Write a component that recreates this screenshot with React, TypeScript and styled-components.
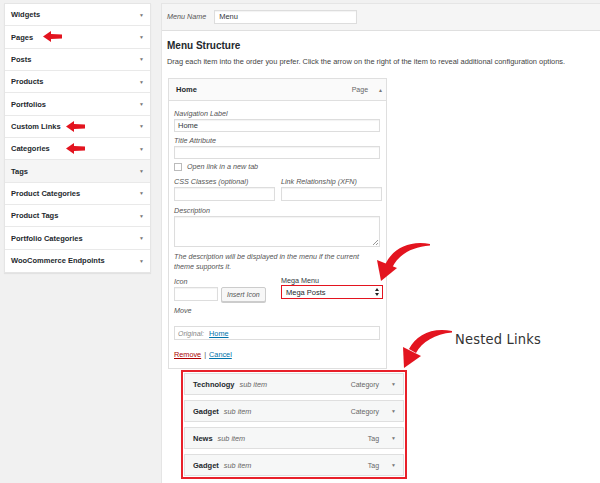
import React from 'react';
import styled, { createGlobalStyle } from 'styled-components';

const GlobalStyle = createGlobalStyle`
  html, body {
    margin: 0;
    padding: 0;
    background: #f1f1f1;
    font-family: "Liberation Sans", Arial, sans-serif;
    color: #23282d;
  }
  * {
    box-sizing: border-box;
  }
`;

interface SideItem {
  label: string;
  arrowAt?: number;
  hover?: boolean;
}

const sideItems: SideItem[] = [
  { label: 'Widgets' },
  { label: 'Pages', arrowAt: 43 },
  { label: 'Posts' },
  { label: 'Products' },
  { label: 'Portfolios' },
  { label: 'Custom Links', arrowAt: 66 },
  { label: 'Categories', arrowAt: 66 },
  { label: 'Tags', hover: true },
  { label: 'Product Categories' },
  { label: 'Product Tags' },
  { label: 'Portfolio Categories' },
  { label: 'WooCommerce Endpoints' },
];

const nested = [
  { title: 'Technology', type: 'Category' },
  { title: 'Gadget', type: 'Category' },
  { title: 'News', type: 'Tag' },
  { title: 'Gadget', type: 'Tag' },
];

const SmallArrow = () => (
  <svg width="20" height="11" viewBox="0 0 20 11">
    <polygon points="0,5.5 8,0 8,3 19,3.5 19,7.5 8,8 8,11" fill="#e3141f" />
  </svg>
);

const SelectArrows = () => (
  <svg width="4" height="8" viewBox="0 0 4 8">
    <polygon points="2,0 4,3 0,3" fill="#222" />
    <polygon points="0,5 4,5 2,8" fill="#222" />
  </svg>
);

const App = () => {
  return (
    <Page>
      <GlobalStyle />
      <Sidebar>
        {sideItems.map((item) => (
          <SideRow key={item.label} $hover={item.hover}>
            <span>{item.label}</span>
            <Caret>▼</Caret>
            {item.arrowAt !== undefined && (
              <Pointer $left={item.arrowAt}>
                <SmallArrow />
              </Pointer>
            )}
          </SideRow>
        ))}
      </Sidebar>

      <Main>
        <TopBar>
          <FieldLabel>Menu Name</FieldLabel>
          <NameInput>Menu</NameInput>
        </TopBar>

        <Body>
          <Heading>Menu Structure</Heading>
          <Intro>
            Drag each item into the order you prefer. Click the arrow on the right of the item to reveal
            additional configuration options.
          </Intro>

          <ItemBox>
            <ItemHeader>
              <ItemTitle>Home</ItemTitle>
              <ItemType $right={4}>Page</ItemType>
              <Caret>▲</Caret>
            </ItemHeader>
            <Settings>
              <FieldLabel>Navigation Label</FieldLabel>
              <TextBox>Home</TextBox>
              <FieldLabel $gap={4}>Title Attribute</FieldLabel>
              <TextBox />
              <CheckRow>
                <CheckBox />
                <FieldLabel>Open link in a new tab</FieldLabel>
              </CheckRow>
              <TwoCols>
                <Col>
                  <FieldLabel>CSS Classes (optional)</FieldLabel>
                  <TextBox $h={14} />
                </Col>
                <Col>
                  <FieldLabel>Link Relationship (XFN)</FieldLabel>
                  <TextBox $h={14} />
                </Col>
              </TwoCols>
              <FieldLabel $gap={5}>Description</FieldLabel>
              <TextArea>
                <Grip />
              </TextArea>
              <Note>
                The description will be displayed in the menu if the current
                <br />
                theme supports it.
              </Note>
              <TwoCols>
                <Col>
                  <FieldLabel>Icon</FieldLabel>
                  <IconRow>
                    <TextBox $w={44} $h={14} />
                    <Button>Insert Icon</Button>
                  </IconRow>
                </Col>
                <Col>
                  <PlainLabel>Mega Menu</PlainLabel>
                  <Select>
                    <span>Mega Posts</span>
                    <SelectArrows />
                  </Select>
                </Col>
              </TwoCols>
              <FieldLabel $gap={4}>Move</FieldLabel>
              <Original>
                <em>Original:</em>
                <LinkText>Home</LinkText>
              </Original>
              <Actions>
                <RemoveLink>Remove</RemoveLink>
                <Sep>|</Sep>
                <LinkText>Cancel</LinkText>
              </Actions>
            </Settings>
          </ItemBox>

          <NestedBox>
            {nested.map((n, i) => (
              <SubItem key={i}>
                <ItemTitle>{n.title}</ItemTitle>
                <SubTag>sub item</SubTag>
                <ItemType $right={7}>{n.type}</ItemType>
                <Caret>▼</Caret>
              </SubItem>
            ))}
          </NestedBox>
        </Body>
      </Main>

      <Annotations width="600" height="483" viewBox="0 0 600 483">
        <g fill="#e3141f">
          <path d="M430,244 C409,240 392,249 385,265 L392,268 C398,255 411,247 430,245.5 Z" />
          <polygon points="381,281 377,260 397,268" />
          <path d="M452,331 C432,327 416,335 409,349 L416,353 C422,342 435,334 452,332.5 Z" />
          <polygon points="404,368 403,347 421,356" />
        </g>
      </Annotations>
      <Handwriting>Nested Links</Handwriting>
    </Page>
  );
};

const Page = styled.div`
  position: relative;
  width: 600px;
  height: 483px;
  overflow: hidden;
  display: flex;
  align-items: flex-start;
  background: #f1f1f1;
`;

const Sidebar = styled.div`
  width: 147px;
  margin: 3px 0 0 4px;
  background: #fff;
  box-shadow: 0 1px 1px rgba(0, 0, 0, 0.06);
  border: 1px solid #e5e5e5;
`;

const SideRow = styled.div<{ $hover?: boolean }>`
  position: relative;
  height: 22.35px;
  display: flex;
  align-items: center;
  justify-content: space-between;
  padding: 0 6px 0 6px;
  font-size: 7.5px;
  font-weight: bold;
  color: #23282d;
  background: ${({ $hover }) => ($hover ? '#f5f5f5' : '#fff')};
  border-bottom: 1px solid #e9e9e9;

  &:last-child {
    border-bottom: none;
  }
`;

const Pointer = styled.span<{ $left: number }>`
  position: absolute;
  left: ${({ $left }) => $left - 5}px;
  top: 5px;
  display: flex;
`;

const Caret = styled.span`
  font-size: 5px;
  color: #777;
  font-weight: normal;
`;

const Main = styled.div`
  flex: 1;
  margin: 3px 0 0 10px;
  display: flex;
  flex-direction: column;
  height: 480px;
  background: #fff;
  border-left: 1px solid #e5e5e5;
  border-top: 1px solid #e5e5e5;
`;

const TopBar = styled.div`
  display: flex;
  align-items: center;
  gap: 8px;
  height: 27px;
  padding: 0 5px;
  background: #f5f5f5;
  border-bottom: 1px solid #dfdfdf;
`;

const FieldLabel = styled.div<{ $gap?: number }>`
  font-size: 7.2px;
  font-style: italic;
  color: #555;
  line-height: 10px;
  margin-top: ${({ $gap }) => $gap ?? 0}px;
`;

const PlainLabel = styled.div`
  font-size: 7.2px;
  color: #32373c;
  line-height: 10px;
  margin-top: -1px;
`;

const NameInput = styled.div`
  width: 143px;
  height: 14px;
  background: #fff;
  border: 1px solid #ddd;
  box-shadow: inset 0 1px 1px rgba(0, 0, 0, 0.05);
  font-size: 7.5px;
  padding: 0 4px;
  line-height: 12px;
  color: #32373c;
`;

const Body = styled.div`
  padding: 9px 5px 0;
  display: flex;
  flex-direction: column;
`;

const Heading = styled.div`
  font-size: 10px;
  font-weight: bold;
  color: #23282d;
  line-height: 12px;
`;

const Intro = styled.div`
  margin-top: 5px;
  font-size: 7.45px;
  color: #444;
  line-height: 10px;
  white-space: nowrap;
`;

const ItemBox = styled.div`
  margin: 11px 0 0 1px;
  width: 219px;
  border: 1px solid #dfdfdf;
  background: #fff;
`;

const ItemHeader = styled.div`
  height: 22px;
  display: flex;
  align-items: center;
  gap: 6px;
  padding: 0 3px 0 7px;
  background: #fafafa;
  border-bottom: 1px solid #dfdfdf;
`;

const ItemTitle = styled.span`
  font-size: 7.5px;
  font-weight: bold;
  color: #23282d;
`;

const ItemType = styled.span<{ $right: number }>`
  margin-left: auto;
  margin-right: ${({ $right }) => $right}px;
  font-size: 7px;
  color: #666;
`;

const Settings = styled.div`
  display: flex;
  flex-direction: column;
  padding: 8px 6px 8px 5px;
`;

const TextBox = styled.div<{ $w?: number; $h?: number }>`
  width: ${({ $w }) => ($w ? `${$w}px` : '100%')};
  height: ${({ $h }) => $h ?? 13}px;
  border: 1px solid #ddd;
  box-shadow: inset 0 1px 1px rgba(0, 0, 0, 0.05);
  background: #fff;
  font-size: 7.5px;
  line-height: 11px;
  padding: 0 3px;
  color: #32373c;
`;

const CheckRow = styled.div`
  display: flex;
  align-items: center;
  gap: 4px;
  height: 12px;
  margin: 2px 0 4px;

  ${FieldLabel} {
    margin-left: 1px;
  }
`;

const CheckBox = styled.span`
  width: 8px;
  height: 8px;
  border: 1px solid #bbb;
  background: #fff;
`;

const TwoCols = styled.div`
  display: grid;
  grid-template-columns: 101px 101px;
  gap: 6px;
`;

const Col = styled.div`
  display: flex;
  flex-direction: column;
`;

const TextArea = styled.div`
  position: relative;
  height: 31px;
  border: 1px solid #ddd;
  box-shadow: inset 0 1px 1px rgba(0, 0, 0, 0.05);
`;

const Grip = styled.span`
  position: absolute;
  right: 1px;
  bottom: 1px;
  width: 5px;
  height: 5px;
  background: linear-gradient(135deg, transparent 45%, #999 45%, #999 55%, transparent 55%, transparent 75%, #999 75%, #999 85%, transparent 85%);
`;

const Note = styled.div`
  margin: 5px 0 5px;
  font-size: 7.2px;
  font-style: italic;
  color: #555;
  line-height: 10px;
`;

const IconRow = styled.div`
  display: flex;
  gap: 3px;
  margin-top: 0;
`;

const Button = styled.div`
  height: 15px;
  padding: 0 5px;
  border: 1px solid #ccc;
  border-radius: 2px;
  background: #f7f7f7;
  box-shadow: 0 1px 0 #ccc;
  font-size: 7px;
  font-style: italic;
  color: #555;
  line-height: 13px;
`;

const Select = styled.div`
  display: flex;
  align-items: center;
  justify-content: space-between;
  height: 14px;
  width: 102px;
  margin-top: -1px;
  border: 1.5px solid #e3141f;
  padding: 0 3px 0 4px;
  font-size: 7.5px;
  color: #23282d;
  background: #fff;
`;

const Original = styled.div`
  display: flex;
  align-items: center;
  gap: 5px;
  margin-top: 10px;
  height: 14px;
  border: 1px solid #ddd;
  padding: 0 3px;
  font-size: 7px;
  color: #888;
`;

const LinkText = styled.span`
  color: #0073aa;
  text-decoration: underline;
  font-size: 7.3px;
`;

const Actions = styled.div`
  display: flex;
  align-items: center;
  gap: 3px;
  margin-top: 10px;
  font-size: 7.3px;
  line-height: 10px;
`;

const RemoveLink = styled.span`
  color: #a00;
  text-decoration: underline;
`;

const Sep = styled.span`
  color: #555;
`;

const NestedBox = styled.div`
  display: flex;
  flex-direction: column;
  gap: 5px;
  margin: 1px 0 0 14px;
  width: 226px;
  padding: 1px;
  border: 2px solid #e8202a;
`;

const SubItem = styled.div`
  height: 22px;
  display: flex;
  align-items: center;
  gap: 5px;
  padding: 0 7px 0 8px;
  background: #f6f7f7;
  border: 1px solid #dfdfdf;
`;

const SubTag = styled.span`
  font-size: 7.3px;
  font-style: italic;
  color: #666;
`;

const Annotations = styled.svg`
  position: absolute;
  left: 0;
  top: 0;
  pointer-events: none;
`;

const Handwriting = styled.div`
  position: absolute;
  left: 455px;
  top: 331px;
  font-family: "DejaVu Sans Condensed", "DejaVu Sans", sans-serif;
  font-weight: 200;
  font-size: 14.5px;
  letter-spacing: 0.2px;
  color: #333;
`;

export default App;
